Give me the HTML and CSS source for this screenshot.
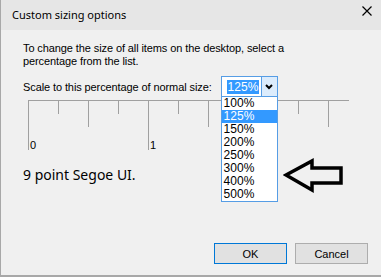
FILE: index.html
```html
<!DOCTYPE html>
<html lang="en">
<head>
    <meta charset="UTF-8">
    <title>Custom sizing options</title>
    <link rel="stylesheet" href="styles.css">
</head>
<body>
    <div class="window">
        <div class="titlebar">
            <div class="title">Custom sizing options</div>
            <svg class="close" width="10" height="10" viewBox="0 0 10 10">
                <path d="M0.5 0.5L9.5 9.5M9.5 0.5L0.5 9.5" stroke="#000" stroke-width="1.2"/>
            </svg>
        </div>

        <div class="content">
            <p class="intro">To change the size of all items on the desktop, select a<br>percentage from the list.</p>

            <div class="scale-row">
                <span>Scale to this percentage of normal size:</span>
                <div class="combo">
                    <div class="combo-value"><span class="selected">125%</span></div>
                    <div class="combo-btn">
                        <svg width="8" height="6" viewBox="0 0 8 6">
                            <path d="M1 1L4 4L7 1" fill="none" stroke="#000" stroke-width="2"/>
                        </svg>
                    </div>
                    <ul class="combo-list">
                        <li>100%</li>
                        <li class="active">125%</li>
                        <li>150%</li>
                        <li>200%</li>
                        <li>250%</li>
                        <li>300%</li>
                        <li>400%</li>
                        <li>500%</li>
                    </ul>
                </div>
            </div>

            <!-- ruler: 120px per inch, ticks every quarter -->
            <svg class="ruler" width="321" height="51" viewBox="0 0 321 51">
                <g stroke="#a0a0a0" stroke-width="1">
                    <line x1="0" y1="0.5" x2="321" y2="0.5"/>
                    <line x1="0.5" y1="0" x2="0.5" y2="50"/>
                    <line x1="30.5" y1="0" x2="30.5" y2="14"/>
                    <line x1="60.5" y1="0" x2="60.5" y2="27"/>
                    <line x1="90.5" y1="0" x2="90.5" y2="14"/>
                    <line x1="120.5" y1="0" x2="120.5" y2="50"/>
                    <line x1="150.5" y1="0" x2="150.5" y2="14"/>
                    <line x1="180.5" y1="0" x2="180.5" y2="27"/>
                    <line x1="210.5" y1="0" x2="210.5" y2="14"/>
                    <line x1="240.5" y1="0" x2="240.5" y2="50"/>
                    <line x1="270.5" y1="0" x2="270.5" y2="14"/>
                    <line x1="300.5" y1="0" x2="300.5" y2="27"/>
                </g>
                <text x="2" y="49">0</text>
                <text x="122" y="49">1</text>
                <text x="242" y="49">2</text>
            </svg>

            <div class="sample">9 point Segoe UI.</div>

            <div class="buttons">
                <button class="btn default">OK</button>
                <button class="btn">Cancel</button>
            </div>
        </div>

        <!-- hand drawn arrow pointing at the list -->
        <svg class="arrow" width="62" height="36" viewBox="0 0 62 36">
            <path d="M3 17L29 3V10H58V25H29V32Z" fill="none" stroke="#000" stroke-width="3.5" stroke-linejoin="miter"/>
        </svg>
    </div>
</body>
</html>
```

FILE: styles.css
```css
body {
    margin: 0;
    padding: 0;
    background: #f0f0f0;
    font-family: 'Liberation Sans', Arial, sans-serif;
    font-size: 11px;
    color: #000;
}
.window {
    position: relative;
    height: 275px;
    border-left: 1px solid #a8a8a8;
    border-bottom: 2px solid #a8a8a8;
    box-sizing: content-box;
    display: flex;
    flex-direction: column;
}
.titlebar {
    height: 30px;
    background: #e6e6e6;
    display: flex;
    align-items: center;
    justify-content: space-between;
    padding: 0 9px 0 11px;
    flex-shrink: 0;
}
.title {
    font-family: 'Noto Sans', sans-serif;
    font-size: 11px;
    margin-top: -1px;
}
.close {
    margin-top: -8px;
}
.content {
    flex: 1;
    display: flex;
    flex-direction: column;
    padding: 12px 13px 11px 22px;
}
.intro {
    margin: 0;
    line-height: 13px;
    letter-spacing: -0.1px;
}
.scale-row {
    display: flex;
    align-items: center;
    margin-top: 8px;
    letter-spacing: -0.1px;
}
.combo {
    position: relative;
    display: flex;
    width: 55px;
    height: 19px;
    margin-left: 9px;
    border: 1px solid #569de5;
    background: #fff;
    letter-spacing: 0;
}
.combo-value {
    flex: 1;
    display: flex;
    align-items: center;
    padding-left: 5px;
}
.selected {
    background: #3399ff;
    color: #fff;
    font-size: 12px;
    line-height: 14px;
    padding: 0 1px;
}
.combo-btn {
    width: 15px;
    background: #dcecfc;
    border-left: 1px solid #569de5;
    display: flex;
    align-items: center;
    justify-content: center;
}
.combo-list {
    position: absolute;
    top: 20px;
    left: -1px;
    width: 55px;
    margin: 0;
    padding: 0;
    list-style: none;
    background: #fff;
    border: 1px solid #569de5;
    border-top: none;
    z-index: 2;
}
.combo-list li {
    height: 13px;
    line-height: 13px;
    padding-left: 2px;
    font-size: 12px;
}
.combo-list li.active {
    background: #3399ff;
    color: #fff;
}
.ruler {
    display: block;
    margin: 3px 0 0 5px;
    overflow: visible;
}
.ruler text {
    font-family: 'Liberation Sans', Arial, sans-serif;
    font-size: 11px;
}
.sample {
    font-family: 'Noto Sans', sans-serif;
    font-size: 14px;
    margin-top: 14px;
}
.buttons {
    margin-top: auto;
    display: flex;
    justify-content: flex-end;
    gap: 8px;
}
.btn {
    width: 73px;
    height: 21px;
    background: #e1e1e1;
    border: 1px solid #adadad;
    font-family: 'Liberation Sans', Arial, sans-serif;
    font-size: 11px;
    padding: 0;
}
.btn.default {
    border-color: #0078d7;
}
.arrow {
    position: absolute;
    left: 282px;
    top: 158px;
}
```
